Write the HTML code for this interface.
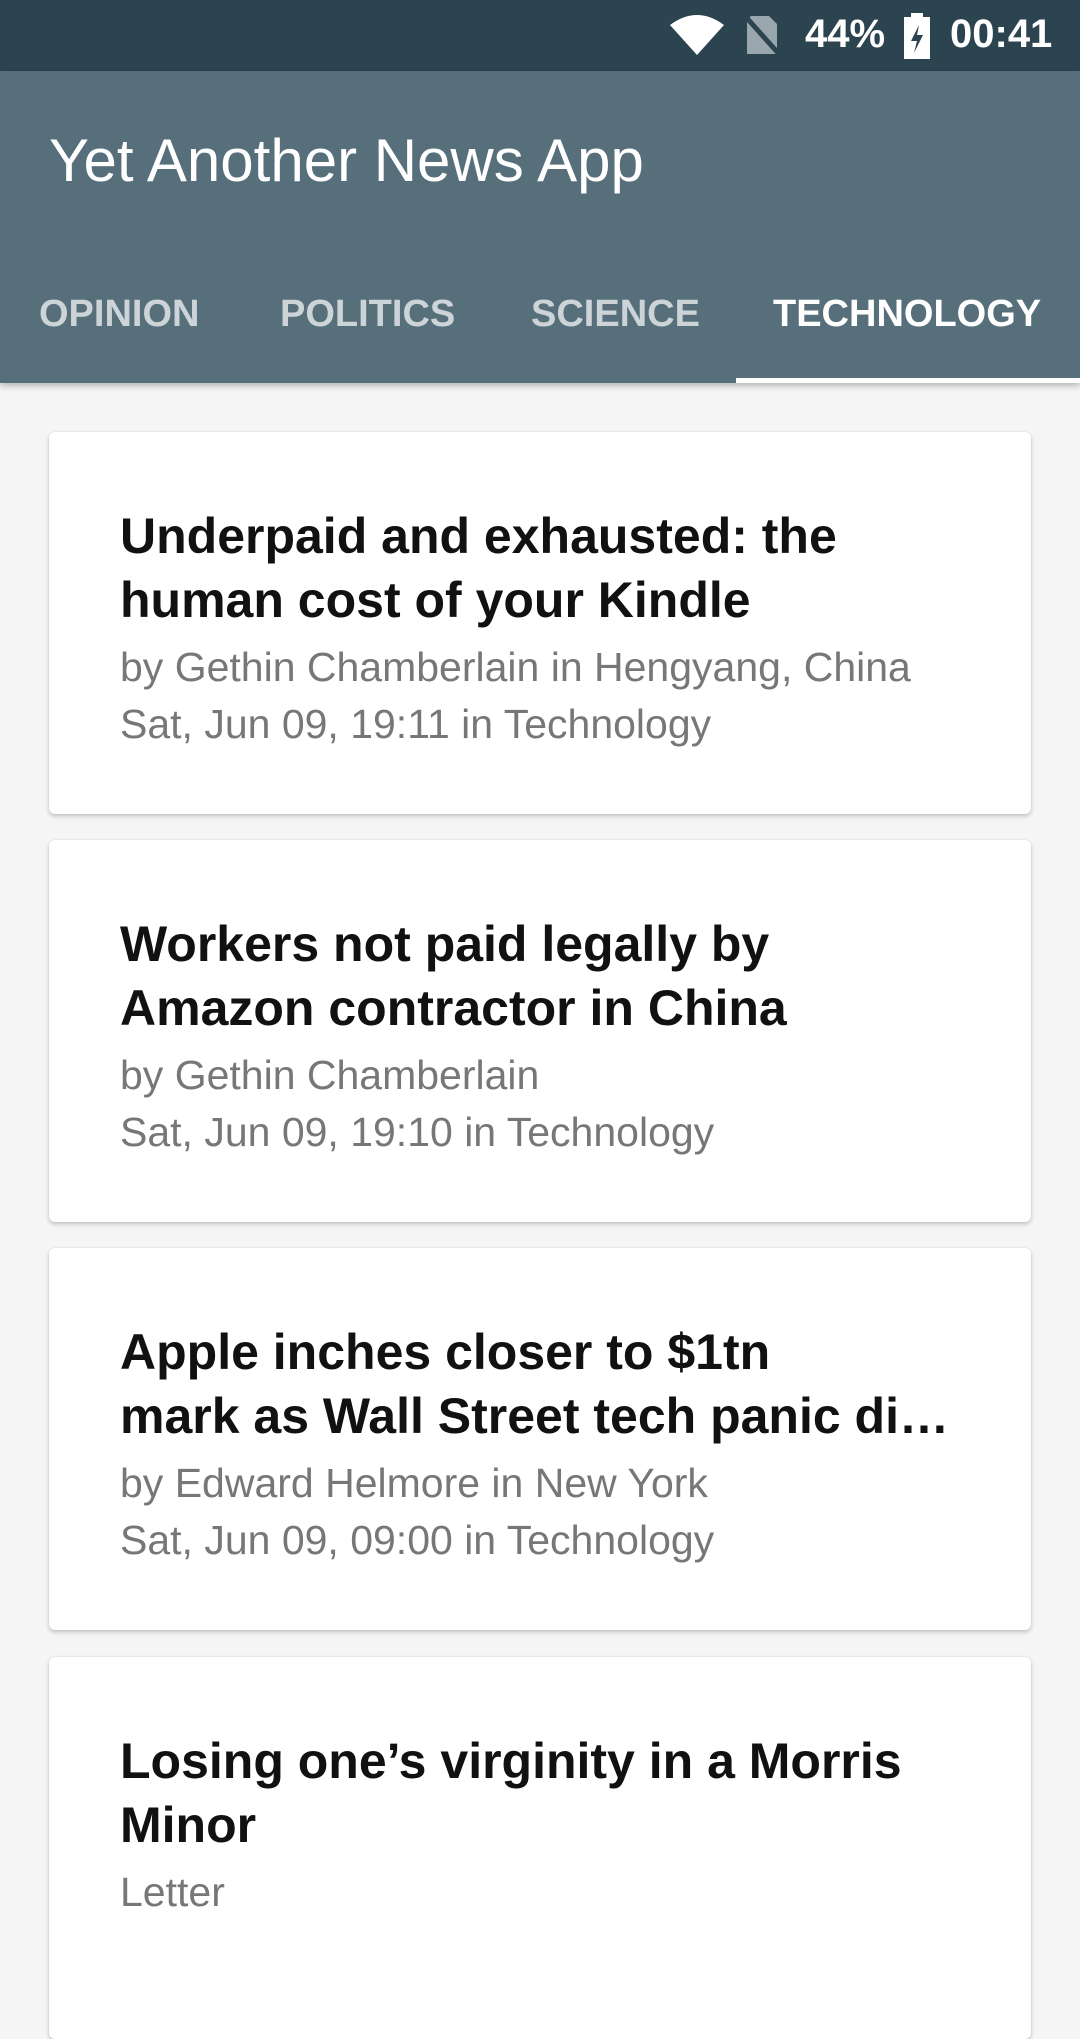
<!DOCTYPE html>
<html><head><meta charset="utf-8">
<style>
*{margin:0;padding:0;box-sizing:border-box}
body{width:1080px;height:1920px;overflow:hidden;background:#f5f5f5;font-family:"Liberation Sans",Roboto,sans-serif;position:relative}
.status{position:absolute;left:0;top:0;width:1080px;height:71px;background:#2c4350;color:#fff}
.toolbar{position:absolute;left:0;top:71px;width:1080px;height:312px;background:#566f7b;box-shadow:0 3px 6px rgba(0,0,0,.25)}
.title{position:absolute;left:49px;top:58px;font-size:60px;color:#fff;line-height:1}
.tab{position:absolute;top:224px;font-size:38px;font-weight:bold;color:rgba(255,255,255,.7);line-height:1}
.ind{position:absolute;left:736px;top:307px;width:344px;height:5px;background:#fff}
.card{position:absolute;left:49px;width:982px;height:382px;background:#fff;border-radius:6px;box-shadow:0 2px 4px rgba(0,0,0,.22),0 0 1px rgba(0,0,0,.15);padding:72px 0 0 71px}
.h{font-size:50px;font-weight:bold;color:#111;line-height:64px;white-space:nowrap}
.s{font-size:41px;color:#777;line-height:57px;margin-top:7px;white-space:nowrap}
.st{position:absolute;top:14px;font-size:40px;font-weight:bold;line-height:1}
</style></head><body>
<div class="status">
<svg style="position:absolute;left:670px;top:15px" width="54" height="40" viewBox="0 0 54 40"><path d="M0 10 Q27 -10 54 10 L27 40 Z" fill="#fff"/></svg>
<svg style="position:absolute;left:743px;top:14px" width="38" height="42" viewBox="0 0 38 42"><path d="M8 2 H26 L34 10 V40 H4 V6 Z" fill="#9aa6ad"/><path d="M2 2 L36 40" stroke="#2c4350" stroke-width="5"/></svg>
<div class="st" style="left:805px">44%</div>
<svg style="position:absolute;left:903px;top:13px" width="28" height="46" viewBox="0 0 28 46"><rect x="8" y="0" width="12" height="5" fill="#fff"/><rect x="1" y="4" width="26" height="42" fill="#fff"/><path d="M16 12 L8 28 H14 L11 40 L20 22 H14 Z" fill="#2c4350"/></svg>
<div class="st" style="left:950px">00:41</div>
</div>
<div class="toolbar">
<div class="title" style="top:60px">Yet Another News App</div>
<div class="tab" style="left:39px">OPINION</div>
<div class="tab" style="left:280px">POLITICS</div>
<div class="tab" style="left:531px">SCIENCE</div>
<div class="tab" style="left:773px;color:#fff">TECHNOLOGY</div>
<div class="ind"></div>
</div>
<div class="card" style="top:432px"><div class="h">Underpaid and exhausted: the<br>human cost of your Kindle</div><div class="s">by Gethin Chamberlain in Hengyang, China<br>Sat, Jun 09, 19:11 in Technology</div></div>
<div class="card" style="top:840px"><div class="h">Workers not paid legally by<br>Amazon contractor in China</div><div class="s">by Gethin Chamberlain<br>Sat, Jun 09, 19:10 in Technology</div></div>
<div class="card" style="top:1248px"><div class="h">Apple inches closer to $1tn<br>mark as Wall Street tech panic di…</div><div class="s">by Edward Helmore in New York<br>Sat, Jun 09, 09:00 in Technology</div></div>
<div class="card" style="top:1657px"><div class="h">Losing one’s virginity in a Morris<br>Minor</div><div class="s">Letter</div></div>
</body></html>
